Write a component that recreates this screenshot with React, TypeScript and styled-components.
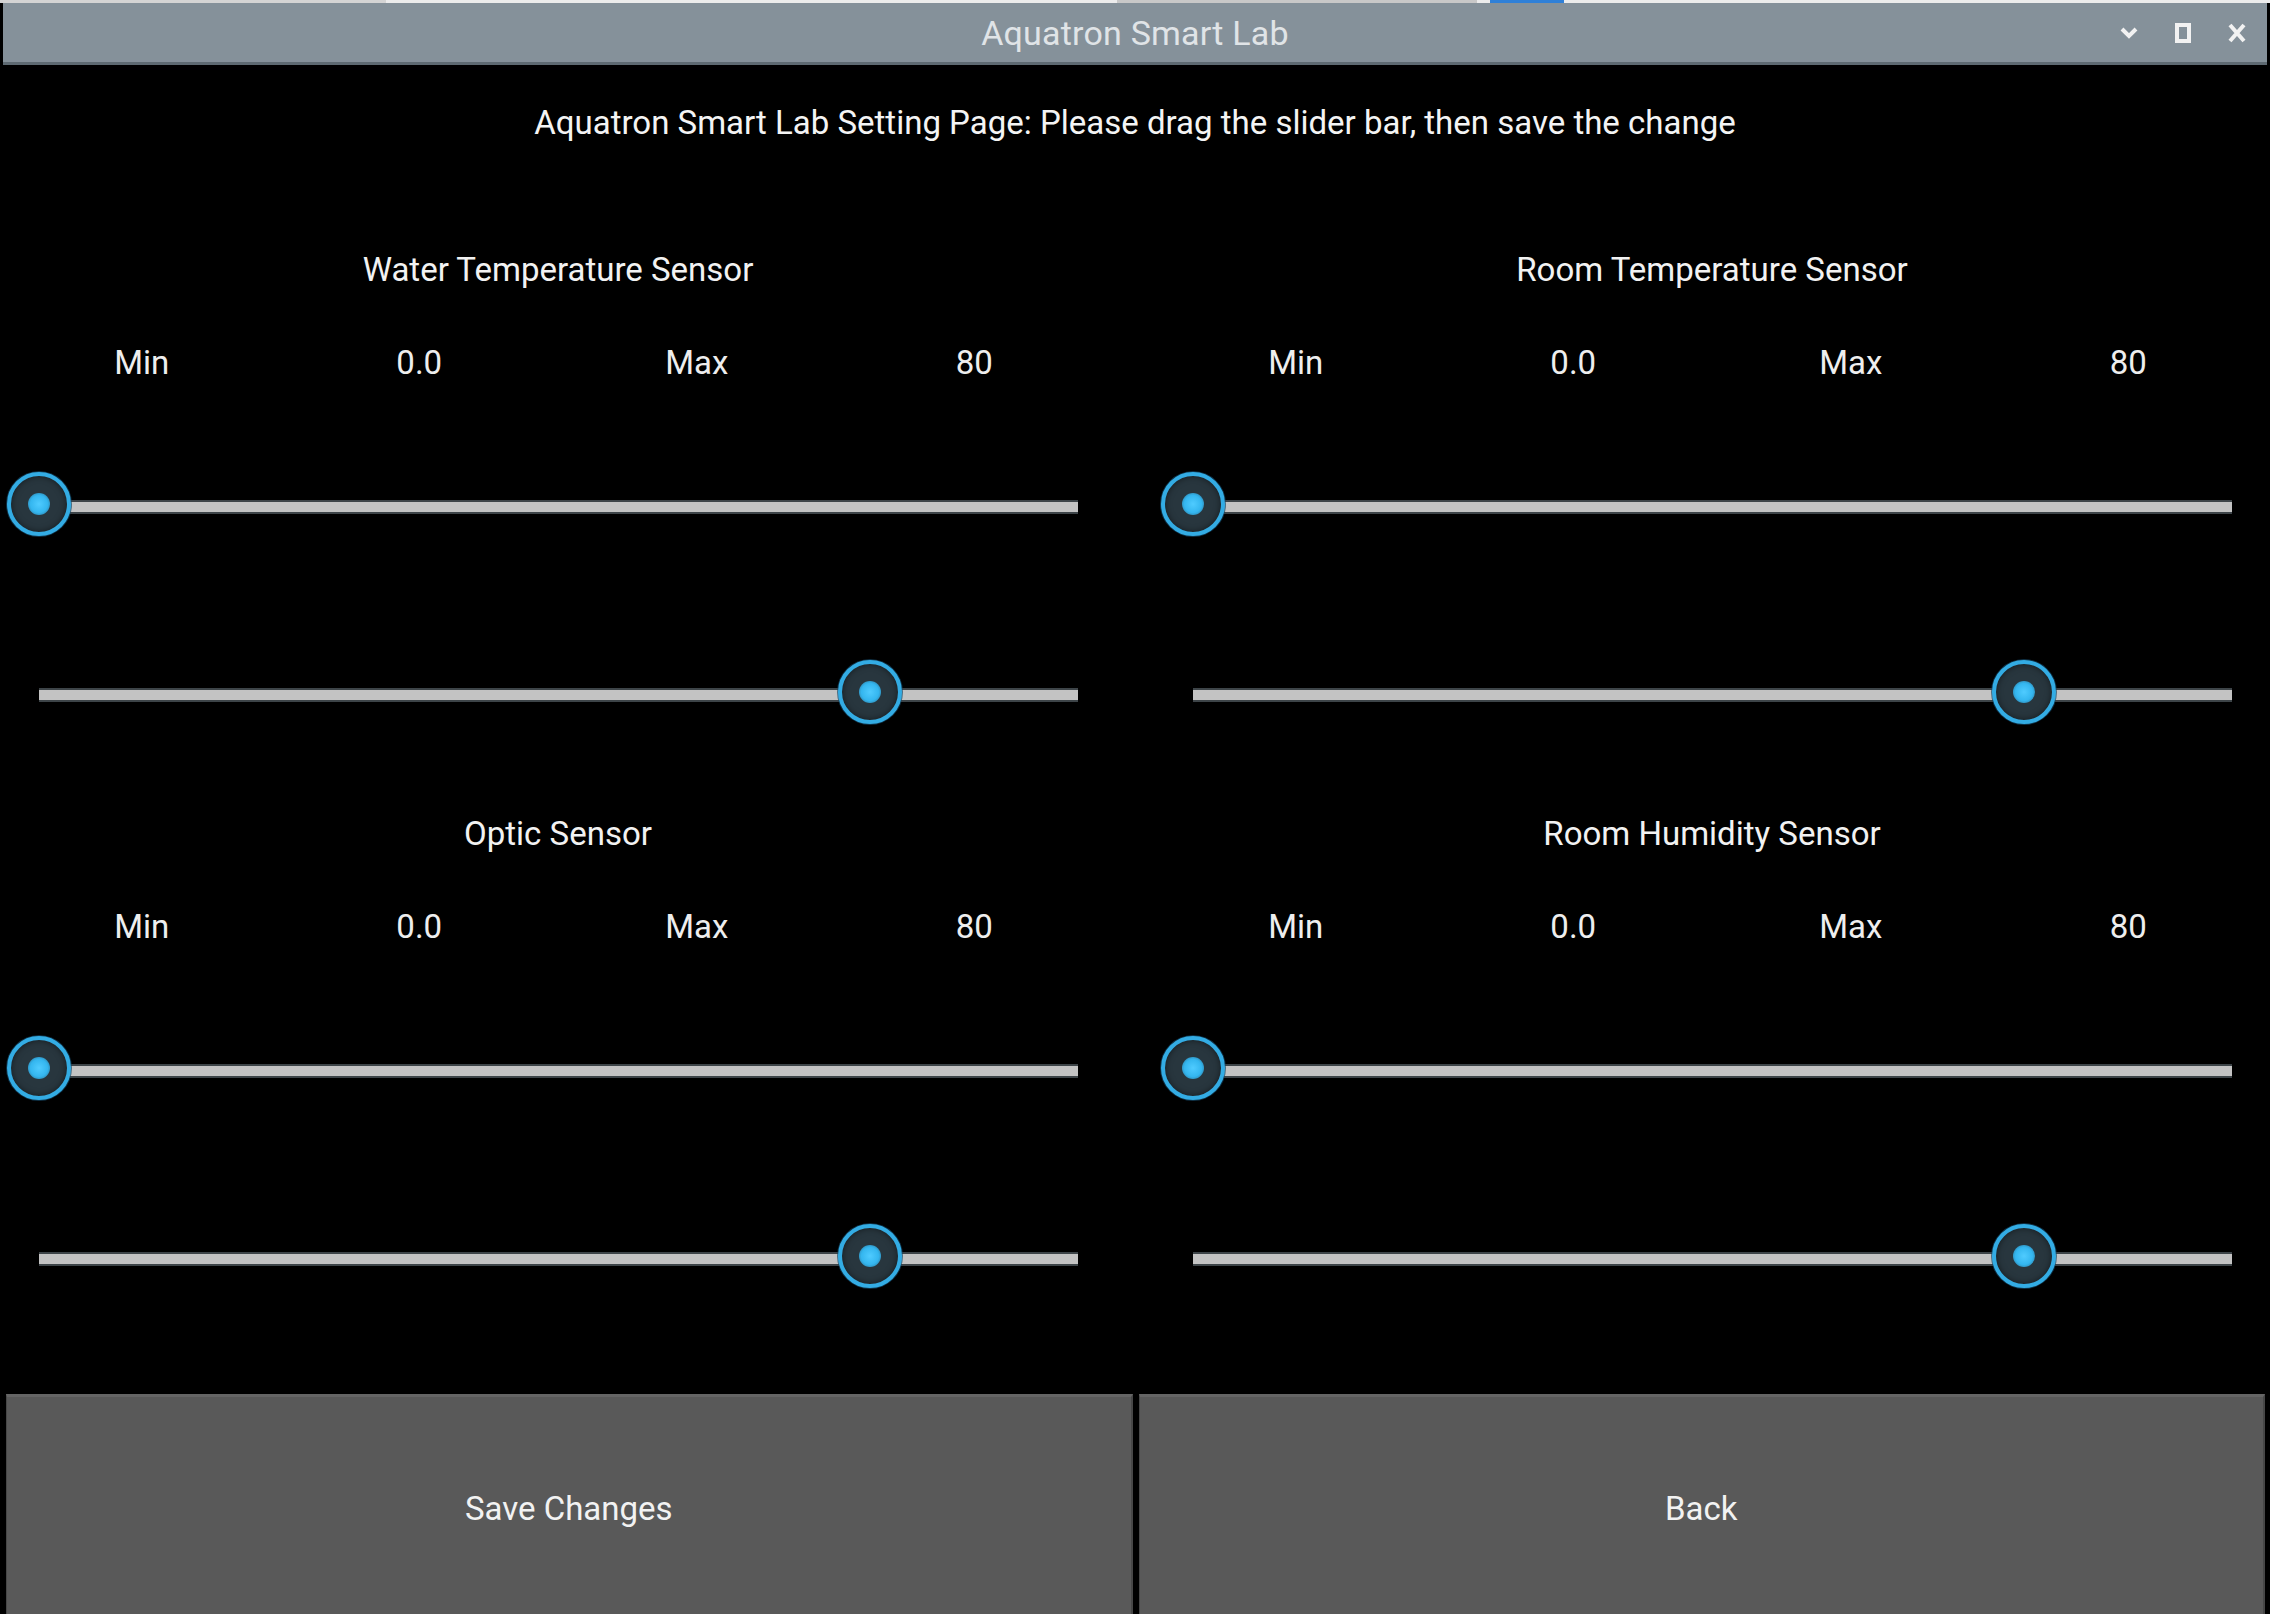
import React from 'react';
import styled, { createGlobalStyle } from 'styled-components';

const GlobalStyles = createGlobalStyle`
  * {
    margin: 0;
    padding: 0;
    box-sizing: border-box;
  }

  html, body {
    width: 2270px;
    height: 1614px;
    overflow: hidden;
    background-color: #000;
  }

  body {
    color: #f0f0f0;
    font-family: Roboto, "Liberation Sans", sans-serif;
  }
`;

const Screen = styled.div`
  width: 2270px;
  height: 1614px;
  display: flex;
  flex-direction: column;
  background-color: #000;
  overflow: hidden;

  & > * {
    flex-shrink: 0;
  }
`

const TopStrip = styled.div`
  display: flex;
  height: 3px;
  width: 100%;
  background-color: #ececec;
`

const StripPart = styled.div<{ $w: number; $c: string }>`
  width: ${p => p.$w}px;
  height: 100%;
  background-color: ${p => p.$c};
`

const TitleBar = styled.div`
  display: grid;
  grid-template-columns: 1fr auto 1fr;
  align-items: center;
  height: 62px;
  margin: 0 3px 0 3px;
  background-color: #85919a;
  border-bottom: 3px solid #5e6a72;
`

const TitleText = styled.div`
  grid-column: 2;
  font-size: 34px;
  color: #e0e4e7;
  letter-spacing: 0.2px;
`

const Controls = styled.div`
  grid-column: 3;
  display: flex;
  justify-content: flex-end;
  align-items: center;
  gap: 18px;
  padding-right: 12px;
`

const ControlBtn = styled.div`
  width: 36px;
  height: 36px;
  display: flex;
  align-items: center;
  justify-content: center;
`

const Instruction = styled.div`
  height: 114px;
  display: flex;
  align-items: center;
  justify-content: center;
  font-size: 33px;
  color: #f4f4f4;
`

const SensorGrid = styled.div`
  display: grid;
  grid-template-columns: 1110px 1110px;
  column-gap: 44px;
  margin-left: 3px;
`

const SensorBlock = styled.div`
  height: 564px;
  padding-top: 60px;
  display: flex;
  flex-direction: column;
`

const SensorTitle = styled.div`
  height: 60px;
  display: flex;
  align-items: center;
  justify-content: center;
  font-size: 33px;
  color: #f2f2f2;
`

const LabelRow = styled.div`
  margin-top: 33px;
  height: 60px;
  display: grid;
  grid-template-columns: repeat(4, 1fr);
  align-items: center;
`

const Label = styled.div`
  text-align: center;
  font-size: 33px;
  color: #eeeeee;
`

const SliderRow = styled.div<{ $top: number }>`
  margin-top: ${p => p.$top}px;
  height: 70px;
  padding: 0 35px 0 36px;
  display: flex;
  align-items: center;
`

const Track = styled.div`
  position: relative;
  width: 100%;
  height: 14px;
  background-color: #c3c3c3;
  border-top: 2px solid #3d4448;
  border-bottom: 2px solid #3d4448;
`

const Knob = styled.div`
  position: absolute;
  top: 50%;
  width: 64px;
  height: 64px;
  margin-left: -32px;
  margin-top: -35px;
  border-radius: 50%;
  background-color: #28363e;
  border: 4px solid #33ace4;
  box-shadow: 0 0 0 1px rgba(20, 70, 100, 0.7), inset 0 0 6px rgba(0, 0, 0, 0.5);
  display: flex;
  align-items: center;
  justify-content: center;
`

const KnobDot = styled.div`
  width: 22px;
  height: 22px;
  border-radius: 50%;
  background: radial-gradient(circle, #4fcbff 0%, #34b6ef 55%, rgba(45, 150, 205, 0.45) 100%);
`

const ButtonRow = styled.div`
  margin-top: 87px;
  display: grid;
  grid-template-columns: 1fr 1fr;
  column-gap: 6px;
  padding: 0 5px 0 6px;
`

const ActionButton = styled.button`
  height: 226px;
  background-color: #595959;
  border: none;
  border-top: 3px solid #656565;
  border-left: 1px solid #474747;
  border-right: 2px solid #474747;
  color: #f2f2f2;
  font-family: Roboto, "Liberation Sans", sans-serif;
  font-size: 33px;
  cursor: pointer;
`

type SliderProps = { value: number }

const Slider = ({ value }: SliderProps) => (
  <>
    <SliderRow $top={80}>
      <Track>
        <Knob style={{ left: '0%' }}>
          <KnobDot />
        </Knob>
      </Track>
    </SliderRow>
    <SliderRow $top={118}>
      <Track>
        <Knob style={{ left: `${value * 100}%` }}>
          <KnobDot />
        </Knob>
      </Track>
    </SliderRow>
  </>
)

const sensors = [
  'Water Temperature Sensor',
  'Room Temperature Sensor',
  'Optic Sensor',
  'Room Humidity Sensor',
]

export default function App() {
  return (
    <Screen>
      <GlobalStyles />
      <TopStrip>
        <StripPart $w={386} $c="#d4d4d4" />
        <StripPart $w={731} $c="#ececec" />
        <StripPart $w={360} $c="#c8c8c8" />
        <StripPart $w={13} $c="#ececec" />
        <StripPart $w={74} $c="#2f80d8" />
      </TopStrip>
      <TitleBar>
        <TitleText>Aquatron Smart Lab</TitleText>
        <Controls>
          <ControlBtn>
            <svg width="18" height="12" viewBox="0 0 18 12">
              <path d="M2 2 L9 9 L16 2" fill="none" stroke="#f2f2f2" strokeWidth="4" />
            </svg>
          </ControlBtn>
          <ControlBtn>
            <svg width="16" height="20" viewBox="0 0 16 20">
              <rect x="2" y="2" width="12" height="16" fill="none" stroke="#f2f2f2" strokeWidth="4" />
            </svg>
          </ControlBtn>
          <ControlBtn>
            <svg width="18" height="20" viewBox="0 0 18 20">
              <path d="M2 2 L16 18 M16 2 L2 18" fill="none" stroke="#f2f2f2" strokeWidth="4" />
            </svg>
          </ControlBtn>
        </Controls>
      </TitleBar>
      <Instruction>
        Aquatron Smart Lab Setting Page: Please drag the slider bar, then save the change
      </Instruction>
      <SensorGrid>
        {sensors.map(name => (
          <SensorBlock key={name}>
            <SensorTitle>{name}</SensorTitle>
            <LabelRow>
              <Label>Min</Label>
              <Label>0.0</Label>
              <Label>Max</Label>
              <Label>80</Label>
            </LabelRow>
            <Slider value={0.8} />
          </SensorBlock>
        ))}
      </SensorGrid>
      <ButtonRow>
        <ActionButton>Save Changes</ActionButton>
        <ActionButton>Back</ActionButton>
      </ButtonRow>
    </Screen>
  );
}
